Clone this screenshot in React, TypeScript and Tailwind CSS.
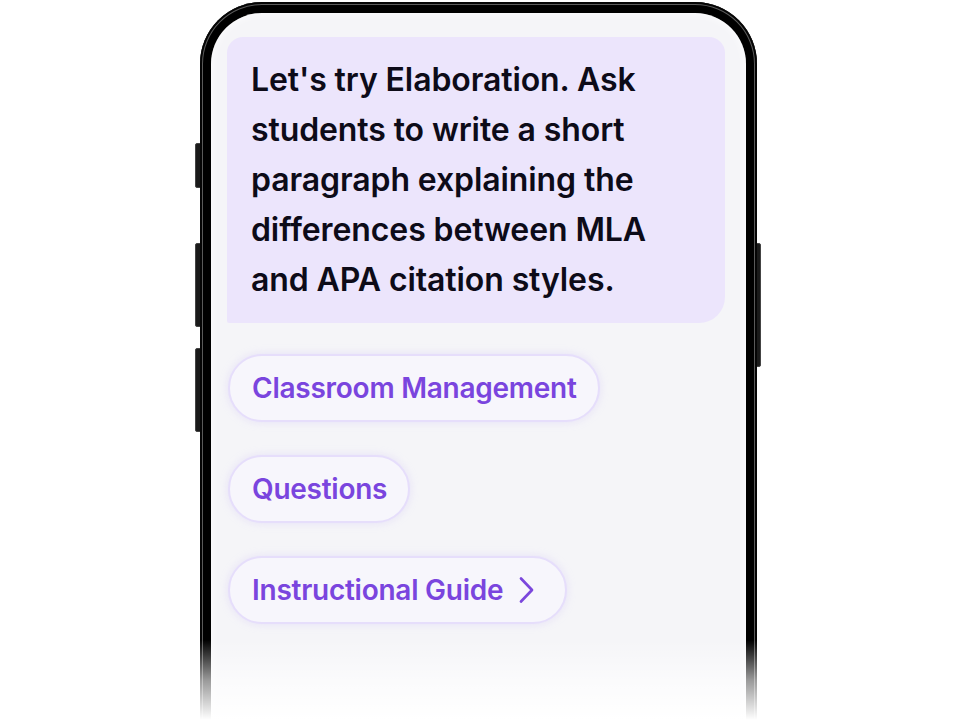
import React from "react";

function Chevron() {
  return (
    <svg width="17" height="28" viewBox="0 0 17 28" fill="none">
      <path d="M3 2.5 L14 14 L3 25.5" stroke="#7b47dc" strokeWidth="2.7" strokeLinecap="round" strokeLinejoin="round" />
    </svg>
  );
}

function Chip({ label, chevron }: { label: string; chevron?: boolean }) {
  return (
    <div className={`self-start flex items-center gap-[15px] h-[68px] pl-[22px] ${chevron ? "pr-[30px]" : "pr-[21px]"} rounded-full border-2 border-[#e6defb] bg-[#f7f6fc] shadow-[0_0_8px_rgba(200,185,245,0.35)]`}>
      <span className="text-[28px] font-semibold leading-[64px] text-[#7a45de] tracking-[-0.25px] whitespace-nowrap">{label}</span>
      {chevron && <Chevron />}
    </div>
  );
}

export default function App() {
  return (
    <div className="relative w-full h-[720px] bg-white overflow-hidden" style={{ fontFamily: "Inter, 'Noto Sans', sans-serif" }}>
      <div className="relative ml-[200px] mt-[2px] w-[557px] h-[780px]">
        {/* side buttons */}
        <div className="absolute left-[-5px] top-[141px] w-[6px] h-[45px] rounded-l-[2px] bg-[#1a1a1a] border border-[#444]" />
        <div className="absolute left-[-5px] top-[241px] w-[6px] h-[84px] rounded-l-[2px] bg-[#1a1a1a] border border-[#444]" />
        <div className="absolute left-[-5px] top-[346px] w-[6px] h-[84px] rounded-l-[2px] bg-[#1a1a1a] border border-[#444]" />
        <div className="absolute right-[-4px] top-[241px] w-[5px] h-[124px] rounded-r-[2px] bg-[#1a1a1a] border border-[#444]" />
        <div className="relative w-full h-full rounded-[62px] bg-black p-[11px] shadow-[inset_0_0_0_2px_#050505,inset_0_0_0_3px_#5a5a5a]">
          <div className="w-full h-full rounded-[51px] bg-[#f5f5f8] pt-[24px] pl-[16px] pr-[21px] flex flex-col shadow-[inset_0_0_10px_rgba(255,255,255,0.9)]">
            <div className="bg-[#ece5fc] rounded-tl-[16px] rounded-tr-[16px] rounded-br-[26px] rounded-bl-[2px] pl-[24px] pr-[40px] py-[18px]">
              <p className="text-[32px] font-semibold leading-[50px] text-[#0d0b18] tracking-[-0.1px]">
                Let's try Elaboration. Ask students to write a short paragraph explaining the differences between MLA and APA citation styles.
              </p>
            </div>
            <div className="flex flex-col gap-[33px] mt-[31px] pl-[1px]">
              <Chip label="Classroom Management" />
              <Chip label="Questions" />
              <Chip label="Instructional Guide" chevron />
            </div>
          </div>
        </div>
      </div>
      <div className="absolute left-0 right-0 bottom-0 h-[80px] bg-gradient-to-b from-[rgba(255,255,255,0)] via-[rgba(255,255,255,0.6)] to-white" />
    </div>
  );
}
